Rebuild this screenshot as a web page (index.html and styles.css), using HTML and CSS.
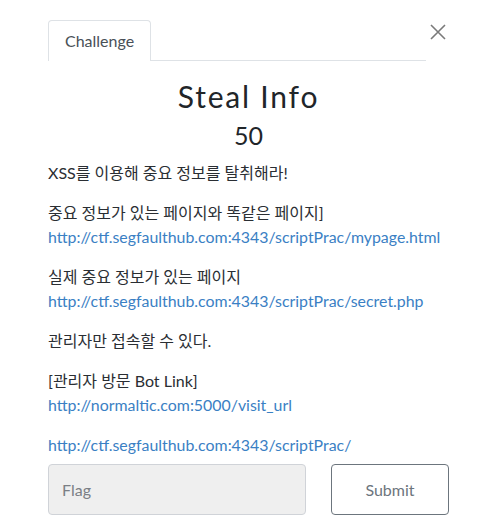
FILE: index.html
```html
<!DOCTYPE html>
<html>
<head>
<meta charset="utf-8">
<link rel="stylesheet" href="styles.css">
</head>
<body>
<div class="modal">
  <div class="head">
    <ul class="tabs">
      <li class="tab active">Challenge</li>
    </ul>
    <button class="close" aria-label="Close">
      <svg width="18" height="18" viewBox="0 0 18 18"><path d="M2 2L16 16M16 2L2 16" stroke="#7a7a7a" stroke-width="1.6" fill="none"/></svg>
    </button>
  </div>
  <h2 class="title">Steal Info</h2>
  <h3 class="value">50</h3>
  <div class="desc">
    <p>XSS를 이용해 중요 정보를 탈취해라!</p>
    <p>중요 정보가 있는 페이지와 똑같은 페이지]<br><a href="#">http://ctf.segfaulthub.com:4343/scriptPrac/mypage.html</a></p>
    <p>실제 중요 정보가 있는 페이지<br><a href="#">http://ctf.segfaulthub.com:4343/scriptPrac/secret.php</a></p>
    <p>관리자만 접속할 수 있다.</p>
    <p>[관리자 방문 Bot Link]<br><a href="#">http://normaltic.com:5000/visit_url</a></p>
    <p><a href="#">http://ctf.segfaulthub.com:4343/scriptPrac/</a></p>
  </div>
  <form class="submit-row">
    <input class="flag" type="text" placeholder="Flag">
    <button class="submit" type="button">Submit</button>
  </form>
</div>
</body>
</html>
```
FILE: styles.css
```css
html, body { margin: 0; padding: 0; background: #fff; }
body { font-family: Lato, "Noto Sans CJK KR", sans-serif; color: #212529; }
.modal { padding: 20px 45px 0 48px; }
.head { display: flex; align-items: flex-start; }
.tabs { list-style: none; margin: 0; padding: 0; width: 378px; display: flex; border-bottom: 1px solid #dee2e6; }
.tab { font-size: 16px; color: #495057; padding: 0 16px; line-height: 40px; border: 1px solid #dee2e6; border-bottom: none; border-top-left-radius: 4px; border-top-right-radius: 4px; margin-bottom: -1px; background: #fff; height: 41px; box-sizing: border-box; }
.close { border: none; background: none; padding: 0; margin: 3px 0 0 3px; width: 18px; height: 18px; cursor: pointer; }
.close svg { display: block; }
.title { font-size: 30px; font-weight: 400; letter-spacing: 1.8px; text-align: center; margin: 15px 0 0; line-height: 40px; }
.value { font-size: 25px; font-weight: 400; text-align: center; margin: 0; line-height: 38px; }
.desc { font-size: 16px; line-height: 24px; margin-top: 7px; color: #2a2e33; }
.desc p { margin: 0 0 16px; }
.desc p:last-child { margin-bottom: 7px; }
.desc a { color: #3a80c4; text-decoration: none; font-size: 15.9px; }
.submit-row { display: flex; gap: 25px; margin: 0; }
.flag { width: 258px; height: 51px; box-sizing: border-box; background: #efefef; border: 1px solid #d0d3d8; border-radius: 4px; padding: 0 13px; font-family: Lato, sans-serif; font-size: 16px; }
.flag::placeholder { color: #7b7f85; }
.submit { width: 118px; height: 51px; box-sizing: border-box; background: #fff; border: 1px solid #6c757d; border-radius: 4px; color: #6c757d; font-family: Lato, sans-serif; font-size: 16px; }
```
